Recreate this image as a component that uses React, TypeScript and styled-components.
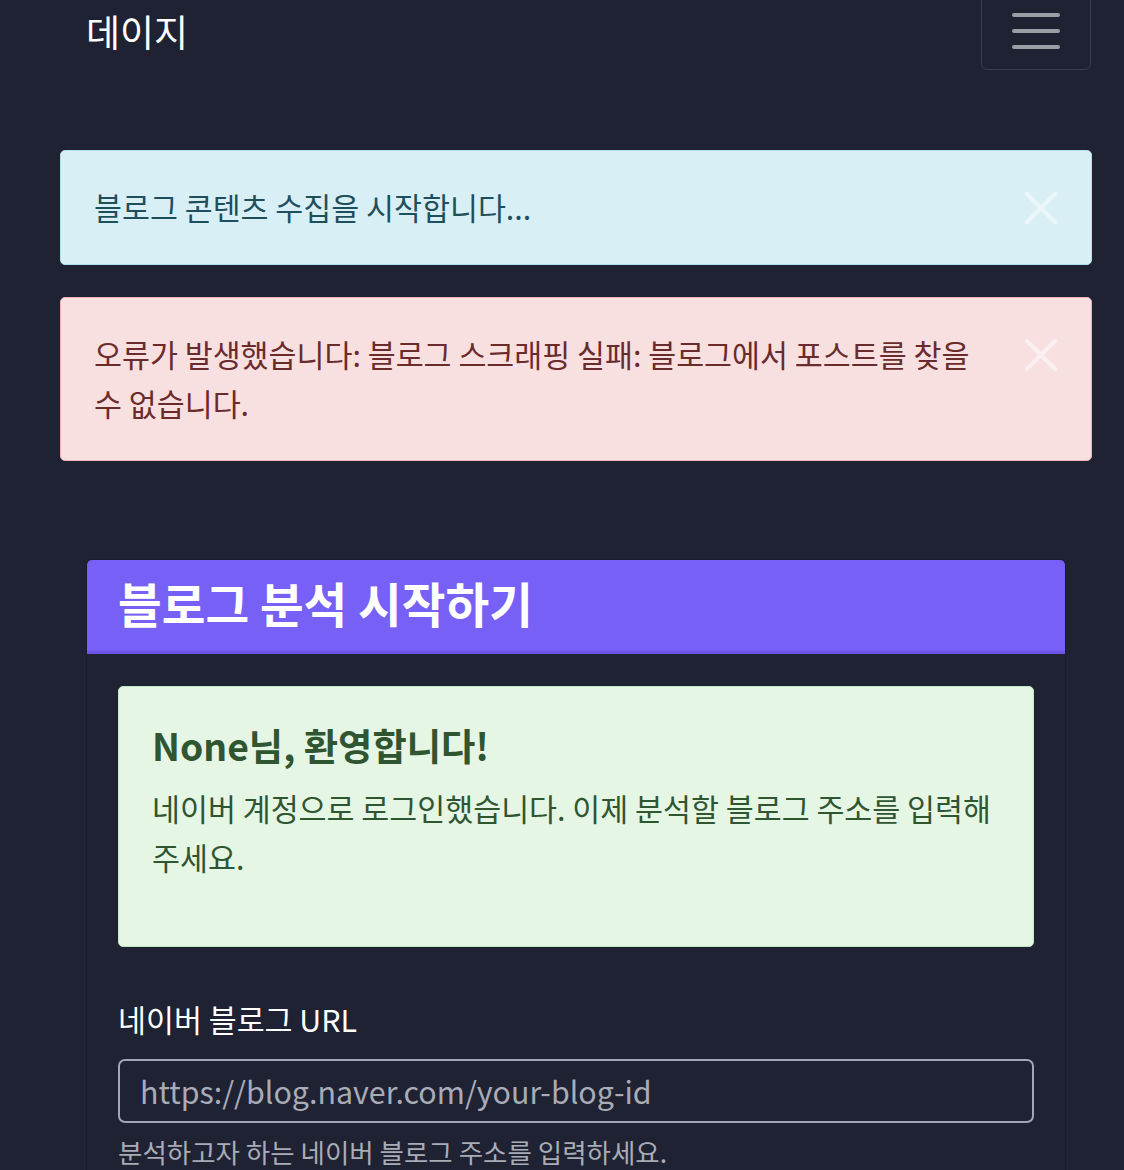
import styled, { createGlobalStyle } from 'styled-components';

const GlobalStyle = createGlobalStyle`
  html, body {
    margin: 0;
    padding: 0;
    background: #1e2233;
  }
  body {
    font-family: 'Noto Sans CJK KR', 'Noto Sans', sans-serif;
    color: #ffffff;
    overflow: hidden;
    word-break: keep-all;
  }
  * {
    box-sizing: border-box;
  }
`;

const Page = styled.div`
  min-height: 1170px;
  background: #1e2233;
`;

const Navbar = styled.nav`
  display: flex;
  align-items: center;
  justify-content: space-between;
  margin-top: -9px;
  padding: 0 33px 0 86px;
  height: 79px;
`;

const Brand = styled.a`
  font-size: 37px;
  line-height: 44px;
  color: #ffffff;
  text-decoration: none;
`;

const Toggler = styled.button`
  width: 110px;
  height: 78px;
  border: 1px solid #393d4e;
  border-radius: 6px;
  background: transparent;
  display: flex;
  flex-direction: column;
  align-items: center;
  justify-content: center;
  gap: 12px;
  padding: 0;
`;

const TogglerLine = styled.span`
  display: block;
  width: 48px;
  height: 4px;
  border-radius: 2px;
  background: #9b9da5;
`;

const Main = styled.main`
  padding: 80px 32px 0 60px;
  display: flex;
  flex-direction: column;
  gap: 32px;
`;

type Tone = 'info' | 'danger' | 'success';

const tones: Record<Tone, { bg: string; border: string; color: string }> = {
  info: { bg: '#d8eff5', border: '#b2dfec', color: '#1f4f5c' },
  danger: { bg: '#f8dfe0', border: '#f1b3b8', color: '#6a2b2c' },
  success: { bg: '#e5f6e5', border: '#c2e5c3', color: '#2f5531' },
};

const Alert = styled.div<{ $tone: Tone }>`
  position: relative;
  background: ${(p) => tones[p.$tone].bg};
  border: 1px solid ${(p) => tones[p.$tone].border};
  color: ${(p) => tones[p.$tone].color};
  border-radius: 5px;
  padding: 32px 98px 32px 33px;
  font-size: 30.4px;
  line-height: 49px;
`;

const CloseButton = styled.button`
  position: absolute;
  top: 32px;
  right: 33px;
  width: 34px;
  height: 49px;
  padding: 0;
  border: 0;
  background: transparent;
  display: flex;
  align-items: center;
  justify-content: center;
  opacity: 0.55;
`;

const Card = styled.section`
  margin: 98px 58px 0 86px;
  border: 1px solid #191c2a;
  border-radius: 6px;
  background: #1e2233;
`;

const CardHeader = styled.header`
  background: #7760f6;
  border-bottom: 3px solid #6b55e2;
  border-radius: 5px 5px 0 0;
  padding: 0 31px;
  height: 94px;
  display: flex;
  align-items: center;
`;

const CardTitle = styled.h3`
  margin: 0 0 6px;
  font-size: 47.5px;
  font-weight: 700;
  line-height: 56px;
  color: #ffffff;
`;

const CardBody = styled.div`
  padding: 32px 31px 64px 31px;
`;

const WelcomeAlert = styled(Alert)`
  padding: 32px 33px;
`;

const AlertHeading = styled.h4`
  margin: 0 0 13px;
  font-size: 37.3px;
  font-weight: 700;
  line-height: 52px;
`;

const AlertText = styled.p`
  margin: 0 0 32px;
`;

const FormGroup = styled.div`
  margin-top: 48px;
  display: flex;
  flex-direction: column;
`;

const Label = styled.label`
  font-size: 30.4px;
  line-height: 49px;
  color: #ffffff;
  margin-bottom: 15px;
`;

const Input = styled.input`
  height: 64px;
  width: 100%;
  border: 2px solid #a2a6b4;
  border-radius: 7px;
  background: #1e2233;
  padding: 0 20px;
  font-family: 'Noto Sans CJK KR', 'Noto Sans', sans-serif;
  font-size: 30.4px;
  color: #ffffff;
  outline: none;

  &::placeholder {
    color: #a9acb6;
  }
`;

const HelpText = styled.div`
  margin-top: 8px;
  font-size: 26.5px;
  line-height: 42px;
  color: #a9acb6;
`;

function CloseIcon() {
  return (
    <svg width="34" height="34" viewBox="0 0 34 34" fill="none">
      <path
        d="M3 3 L31 31 M31 3 L3 31"
        stroke="#ffffff"
        strokeWidth="4"
        strokeLinecap="round"
      />
    </svg>
  );
}

export default function App() {
  return (
    <Page>
      <GlobalStyle />
      <Navbar>
        <Brand href="#">데이지</Brand>
        <Toggler aria-label="메뉴">
          <TogglerLine />
          <TogglerLine />
          <TogglerLine />
        </Toggler>
      </Navbar>
      <Main>
        <Alert $tone="info">
          블로그 콘텐츠 수집을 시작합니다...
          <CloseButton aria-label="닫기">
            <CloseIcon />
          </CloseButton>
        </Alert>
        <Alert $tone="danger">
          오류가 발생했습니다: 블로그 스크래핑 실패: 블로그에서 포스트를 찾을 수 없습니다.
          <CloseButton aria-label="닫기">
            <CloseIcon />
          </CloseButton>
        </Alert>
      </Main>
      <Card>
        <CardHeader>
          <CardTitle>블로그 분석 시작하기</CardTitle>
        </CardHeader>
        <CardBody>
          <WelcomeAlert $tone="success">
            <AlertHeading>None님, 환영합니다!</AlertHeading>
            <AlertText>
              네이버 계정으로 로그인했습니다. 이제 분석할 블로그 주소를 입력해 주세요.
            </AlertText>
          </WelcomeAlert>
          <FormGroup>
            <Label htmlFor="blog-url">네이버 블로그 URL</Label>
            <Input id="blog-url" placeholder="https://blog.naver.com/your-blog-id" />
            <HelpText>분석하고자 하는 네이버 블로그 주소를 입력하세요.</HelpText>
          </FormGroup>
        </CardBody>
      </Card>
    </Page>
  );
}
